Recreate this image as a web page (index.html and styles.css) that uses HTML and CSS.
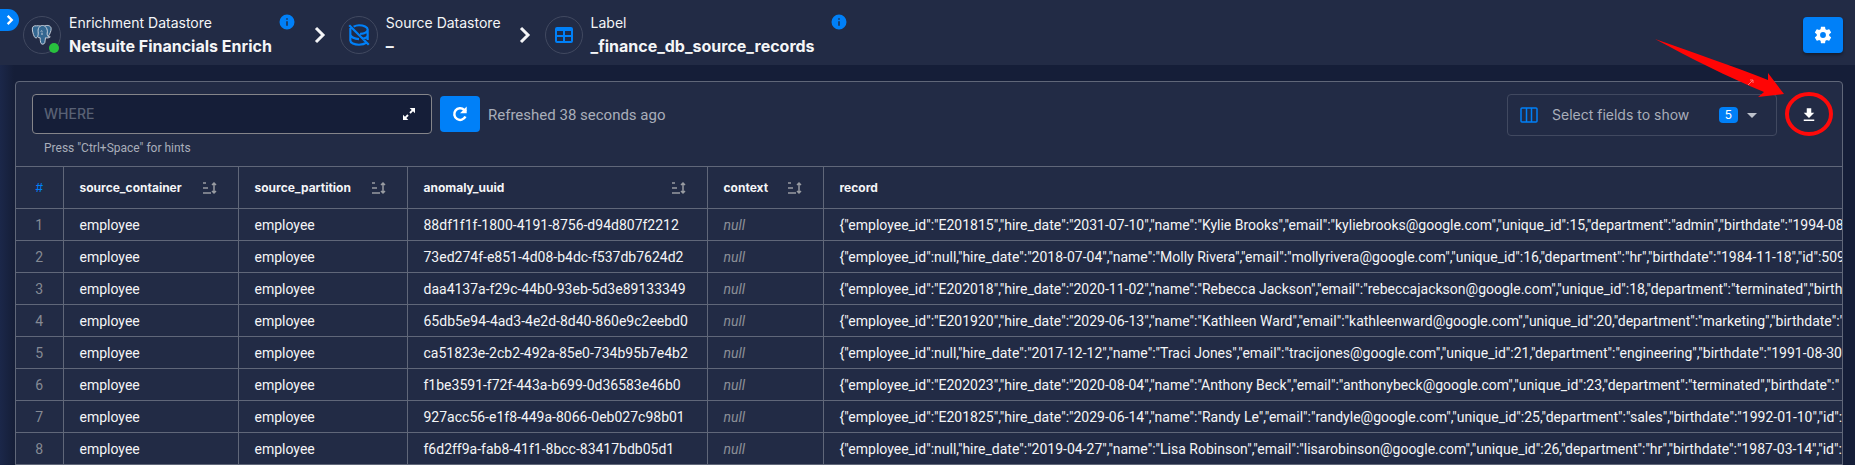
FILE: index.html
```html
<!DOCTYPE html>
<html lang="en">
<head>
<meta charset="utf-8">
<title>_finance_db_source_records</title>
<link rel="stylesheet" href="styles.css">
</head>
<body>
<button class="drawer-toggle" type="button" aria-label="Open sidebar">
  <svg viewBox="0 0 24 24" width="14" height="14"><path d="M8 5l7 7-7 7" fill="none" stroke="currentColor" stroke-width="4"/></svg>
</button>

<header class="topbar">
  <nav class="crumbs" aria-label="Breadcrumb">
    <div class="crumb">
      <span class="avatar">
        <svg viewBox="0 0 24 24" width="22" height="22">
          <path d="M6 2C3 1.500 1 3 1.500 6.500c.4 3 1.600 7.500 3.300 8.600 1 .5 1.800-.4 2.600-1.300L8.500 15H10c.1 2 .1 4.500 1 6.200.8 1.300 3.500 1 4-.7.5-1.800.5-3.800.8-5.500 1.600.4 4.200.3 5.200-1-.6-.3-1.700-.2-2.200-.5 1.700-2.300 3.300-6 3.200-8.500C21.800 1.600 17.800 1 15 2c-1.700-.5-3.500-.5-5 .2C8.800 1.900 7.500 1.800 6 2z" fill="#336791" stroke="#d5dae2" stroke-width="1"/>
          <path d="M10 2.500C8 4 7.500 6 7.800 8.500c.2 2 .2 3.500-.6 5M15 2.300c2 1.600 3 4 2.900 6.200-.4 2-.6 3.500.8 5M12 12V9.500M10.500 8c.6-.6 1.400-.6 2 0" fill="none" stroke="#d5dae2" stroke-width="1"/>
        </svg>
        <span class="status"></span>
      </span>
      <div class="crumb-text crumb-store">
        <span class="crumb-kind">Enrichment Datastore</span>
        <strong class="crumb-name">Netsuite Financials Enrich</strong>
      </div>
      <svg class="info" viewBox="0 0 24 24" width="18" height="18"><path fill="currentColor" d="M13 9h-2V7h2m0 10h-2v-6h2m-1-9A10 10 0 1 0 22 12 10 10 0 0 0 12 2z"/></svg>
    </div>
    <svg class="sep" viewBox="0 0 24 24" width="24" height="24"><path d="M8 5l7 7-7 7" fill="none" stroke="currentColor" stroke-width="3"/></svg>
    <div class="crumb">
      <span class="avatar">
        <svg class="blue" viewBox="0 0 24 24" width="26" height="26" fill="none" stroke="currentColor" stroke-width="2">
          <path d="M7 4.300C8.300 3.600 10 3 12 3c4.400 0 8 1.800 8 4s-3 3.800-7 4M4 5.500V17c0 2.200 3.600 4 8 4 2.800 0 5.300-.7 6.700-1.900M20 7v9.500M4 12c.8 1.800 4 3.500 8 3.800M15 15.500c3-.5 5-1.800 5-3.500M3 3l18 18"/>
        </svg>
      </span>
      <div class="crumb-text">
        <span class="crumb-kind">Source Datastore</span>
        <strong class="crumb-name">–</strong>
      </div>
    </div>
    <svg class="sep" viewBox="0 0 24 24" width="24" height="24"><path d="M8 5l7 7-7 7" fill="none" stroke="currentColor" stroke-width="3"/></svg>
    <div class="crumb">
      <span class="avatar">
        <svg class="blue" viewBox="0 0 24 24" width="24" height="24"><path fill="currentColor" fill-rule="evenodd" d="M5 4h14a2 2 0 0 1 2 2v12a2 2 0 0 1-2 2H5a2 2 0 0 1-2-2V6a2 2 0 0 1 2-2zM5 8v4h6V8zM13 8v4h6V8zM5 14v4h6v-4zM13 14v4h6v-4z"/></svg>
      </span>
      <div class="crumb-text crumb-container">
        <span class="crumb-kind">Label</span>
        <strong class="crumb-name">_finance_db_source_records</strong>
      </div>
      <svg class="info" viewBox="0 0 24 24" width="18" height="18"><path fill="currentColor" d="M13 9h-2V7h2m0 10h-2v-6h2m-1-9A10 10 0 1 0 22 12 10 10 0 0 0 12 2z"/></svg>
    </div>
  </nav>
  <button class="square raised" type="button" aria-label="Settings">
    <svg viewBox="0 0 24 24" width="20" height="20"><path fill="currentColor" d="M12 15.500A3.500 3.500 0 0 1 8.500 12 3.500 3.500 0 0 1 12 8.500a3.500 3.500 0 0 1 3.500 3.500 3.500 3.500 0 0 1-3.500 3.500m7.430-2.530c.04-.32.070-.64.070-.97s-.03-.66-.07-1l2.110-1.630c.19-.15.240-.42.120-.64l-2-3.460c-.12-.22-.39-.31-.61-.22l-2.490 1c-.52-.39-1.060-.73-1.690-.98l-.37-2.650A.506.506 0 0 0 14 2h-4c-.25 0-.46.180-.5.420l-.37 2.650c-.63.250-1.170.590-1.690.980l-2.490-1c-.22-.09-.49 0-.61.220l-2 3.460c-.13.220-.07.490.12.640L4.570 11c-.04.340-.07.670-.07 1s.03.650.07.970l-2.110 1.660c-.19.150-.25.420-.12.640l2 3.460c.12.220.39.300.61.220l2.490-1.010c.52.400 1.060.740 1.690.990l.37 2.650c.04.240.25.420.5.420h4c.25 0 .46-.18.500-.42l.37-2.650c.63-.26 1.170-.59 1.690-.99l2.490 1.010c.22.080.49 0 .61-.22l2-3.460c.12-.22.070-.49-.12-.64z"/></svg>
  </button>
</header>

<main class="panel">
  <div class="toolbar">
    <div class="filter">
      <div class="filter-box">
        <input class="filter-input" type="text" placeholder="WHERE" aria-label="Where clause" aria-describedby="hint">
        <button class="plain" type="button" aria-label="Expand editor">
          <svg viewBox="0 0 24 24" width="16" height="16"><path fill="currentColor" d="M13 3h8v8l-3-3-3.500 3.500-2-2L16 6zM11 21H3v-8l3 3 3.500-3.500 2 2L8 18z"/></svg>
        </button>
      </div>
      <span class="hint" id="hint">Press "Ctrl+Space" for hints</span>
    </div>
    <button class="square" type="button" aria-label="Refresh">
      <svg viewBox="0 0 24 24" width="20" height="20"><path d="M18.500 15A7 7 0 1 1 17 7l2 2" fill="none" stroke="currentColor" stroke-width="3"/><path d="M20 3v8h-8z" fill="currentColor"/></svg>
    </button>
    <span class="refreshed">Refreshed 38 seconds ago</span>
    <div class="fields">
      <svg class="blue" viewBox="0 0 24 24" width="24" height="24"><rect x="4" y="5" width="16" height="14" rx="1" fill="none" stroke="currentColor" stroke-width="1.500"/><path d="M9.500 5v14M14.500 5v14" stroke="currentColor" stroke-width="1.500"/></svg>
      <select class="fields-select" aria-label="Fields to show"><option>Select fields to show</option></select>
      <span class="badge">5</span>
      <svg viewBox="0 0 24 24" width="24" height="24"><path fill="currentColor" d="M7 10l5 5 5-5z"/></svg>
    </div>
    <div class="export">
      <button class="plain" type="button" aria-label="Download">
        <svg viewBox="0 0 24 24" width="18" height="18"><path fill="currentColor" d="M5 20h14v-2H5m14-9h-4V3H9v6H5l7 7z"/></svg>
      </button>
      <svg class="callout" viewBox="0 0 190 110" width="190" height="110">
        <path fill="#ff0505" d="M5 8C45 22 85 36 118 49L118 42 134 63 108 66 114 61C78 46 40 27 5 8Z"/>
        <path d="M98 54l5-5m-3 0h3v3" stroke="#f77" fill="none"/>
        <ellipse cx="159" cy="83" rx="22" ry="20" fill="none" stroke="#ff0a0a" stroke-width="4"/>
      </svg>
    </div>
  </div>

  <div class="grid-wrap">
  <table class="grid">
    <colgroup><col class="c-num"><col class="c-container"><col class="c-partition"><col class="c-uuid"><col class="c-context"><col></colgroup>
    <thead>
      <tr>
        <th class="num" scope="col">#</th>
        <th scope="col"><span class="th">source_container <svg class="sort" viewBox="0 0 16 14" width="16" height="14"><path d="M1 2h3M1 7h5M1 12h8M12 2v10M10 4l2-2 2 2M10 10l2 2 2-2"/></svg></span></th>
        <th scope="col"><span class="th">source_partition <svg class="sort" viewBox="0 0 16 14" width="16" height="14"><path d="M1 2h3M1 7h5M1 12h8M12 2v10M10 4l2-2 2 2M10 10l2 2 2-2"/></svg></span></th>
        <th scope="col"><span class="th">anomaly_uuid <svg class="sort" viewBox="0 0 16 14" width="16" height="14"><path d="M1 2h3M1 7h5M1 12h8M12 2v10M10 4l2-2 2 2M10 10l2 2 2-2"/></svg></span></th>
        <th scope="col"><span class="th">context <svg class="sort" viewBox="0 0 16 14" width="16" height="14"><path d="M1 2h3M1 7h5M1 12h8M12 2v10M10 4l2-2 2 2M10 10l2 2 2-2"/></svg></span></th>
        <th scope="col">record</th>
      </tr>
    </thead>
    <tbody>
      <tr><td class="num">1</td><td>employee</td><td>employee</td><td>88df1f1f-1800-4191-8756-d94d807f2212</td><td class="null">null</td><td>{"employee_id":"E201815","hire_date":"2031-07-10","name":"Kylie Brooks","email":"kyliebrooks@google.com","unique_id":15,"department":"admin","birthdate":"1994-08-0</td></tr>
      <tr><td class="num">2</td><td>employee</td><td>employee</td><td>73ed274f-e851-4d08-b4dc-f537db7624d2</td><td class="null">null</td><td>{"employee_id":null,"hire_date":"2018-07-04","name":"Molly Rivera","email":"mollyrivera@google.com","unique_id":16,"department":"hr","birthdate":"1984-11-18","id":5092</td></tr>
      <tr><td class="num">3</td><td>employee</td><td>employee</td><td>daa4137a-f29c-44b0-93eb-5d3e89133349</td><td class="null">null</td><td>{"employee_id":"E202018","hire_date":"2020-11-02","name":"Rebecca Jackson","email":"rebeccajackson@google.com","unique_id":18,"department":"terminated","birthda</td></tr>
      <tr><td class="num">4</td><td>employee</td><td>employee</td><td>65db5e94-4ad3-4e2d-8d40-860e9c2eebd0</td><td class="null">null</td><td>{"employee_id":"E201920","hire_date":"2029-06-13","name":"Kathleen Ward","email":"kathleenward@google.com","unique_id":20,"department":"marketing","birthdate":"</td></tr>
      <tr><td class="num">5</td><td>employee</td><td>employee</td><td>ca51823e-2cb2-492a-85e0-734b95b7e4b2</td><td class="null">null</td><td>{"employee_id":null,"hire_date":"2017-12-12","name":"Traci Jones","email":"tracijones@google.com","unique_id":21,"department":"engineering","birthdate":"1991-08-30","</td></tr>
      <tr><td class="num">6</td><td>employee</td><td>employee</td><td>f1be3591-f72f-443a-b699-0d36583e46b0</td><td class="null">null</td><td>{"employee_id":"E202023","hire_date":"2020-08-04","name":"Anthony Beck","email":"anthonybeck@google.com","unique_id":23,"department":"terminated","birthdate":"</td></tr>
      <tr><td class="num">7</td><td>employee</td><td>employee</td><td>927acc56-e1f8-449a-8066-0eb027c98b01</td><td class="null">null</td><td>{"employee_id":"E201825","hire_date":"2029-06-14","name":"Randy Le","email":"randyle@google.com","unique_id":25,"department":"sales","birthdate":"1992-01-10","id":5</td></tr>
      <tr><td class="num">8</td><td>employee</td><td>employee</td><td>f6d2ff9a-fab8-41f1-8bcc-83417bdb05d1</td><td class="null">null</td><td>{"employee_id":null,"hire_date":"2019-04-27","name":"Lisa Robinson","email":"lisarobinson@google.com","unique_id":26,"department":"hr","birthdate":"1987-03-14","id":5</td></tr>
    </tbody>
  </table>
  </div>
</main>
</body>
</html>
```

FILE: styles.css
```css
:root {
  --surface: #222b45;
  --page: #151e38;
  --blue: #0080f8;
  --line: #606779;
  --muted: #a9aeba;
}
* { box-sizing: border-box; }
body {
  margin: 0;
  background: linear-gradient(to right, #1b2749, var(--page) 14px);
  color: #f4f5f7;
  font: 14px/20px Inter, sans-serif;
}
svg { display: block; flex: none; }
button, input, select { font: inherit; color: inherit; }
button { border: 0; padding: 0; cursor: pointer; }

.drawer-toggle {
  position: absolute;
  top: 9px;
  left: 0;
  width: 19px;
  height: 22px;
  display: grid;
  place-items: center;
  background: var(--blue);
  color: #fff;
  border-radius: 0 11px 11px 0;
}

.topbar {
  display: flex;
  align-items: center;
  justify-content: space-between;
  min-height: 65px;
  padding: 5px 12px 0 23px;
  background: var(--surface);
}
.crumbs { display: flex; align-items: center; }
.crumb { display: flex; align-items: center; }
.avatar {
  position: relative;
  display: grid;
  place-items: center;
  width: 38px;
  height: 38px;
  margin-right: 8px;
  border: 1px solid #414960;
  border-radius: 50%;
}
.status {
  position: absolute;
  right: 1px;
  bottom: 0;
  width: 10px;
  height: 10px;
  border-radius: 50%;
  background: #28c13e;
}
.crumb-text { display: flex; flex-direction: column; gap: 3px; padding-bottom: 1px; }
.crumb-store { min-width: 202px; }
.crumb-container { min-width: 233px; }
.crumb-name { font-size: 16px; font-weight: 700; line-height: 20px; }
.info { align-self: flex-start; margin-left: 6px; color: var(--blue); }
.blue { color: var(--blue); }
.sep { margin: 0 8px 0 12px; }

.square {
  display: grid;
  place-items: center;
  flex: none;
  width: 40px;
  height: 36px;
  border-radius: 4px;
  background: var(--blue);
  color: #fff;
}
.raised { box-shadow: 0 2px 3px rgba(0, 0, 0, .35); }
.plain { display: grid; place-items: center; background: none; color: #fff; }

.panel {
  margin: 16px 12px 0 15px;
  border: 1px solid var(--line);
  border-radius: 4px 4px 0 0;
  background: var(--surface);
}
.toolbar {
  display: flex;
  align-items: flex-start;
  padding: 12px 24px 0 16px;
  min-height: 84px;
}
.toolbar > .square { margin-top: 2px; }
.filter { display: flex; flex-direction: column; gap: 4px; width: 400px; margin-right: 8px; }
.filter-box {
  display: flex;
  align-items: center;
  height: 40px;
  padding: 0 14px 0 11px;
  border: 1px solid #85858a;
  border-radius: 4px;
  background: var(--page);
}
.filter-input { flex: 1; min-width: 0; padding: 0; border: 0; outline: 0; background: none; }
.filter-input::placeholder { color: #596174; font-weight: 500; opacity: 1; }
.hint { padding-left: 12px; font-family: Roboto, sans-serif; font-size: 12px; color: var(--muted); }
.refreshed { margin: 11px 0 0 8px; font-family: Roboto, sans-serif; font-size: 15px; color: var(--muted); }
.fields {
  display: flex;
  align-items: center;
  width: 270px;
  height: 42px;
  margin-left: auto;
  padding: 0 12px 0 9px;
  border: 1px solid #414960;
  border-radius: 4px;
  color: #bdc1cb;
}
.fields-select {
  flex: 1;
  min-width: 0;
  margin-left: 11px;
  padding: 0;
  border: 0;
  appearance: none;
  background: none;
  color: var(--muted);
}
.badge {
  width: 19px;
  border-radius: 4px;
  margin-right: 2px;
  background: var(--blue);
  color: #fff;
  font-size: 12px;
  line-height: 16px;
  text-align: center;
}
.export { position: relative; display: grid; place-items: center; height: 42px; margin-left: 23px; }
.callout { position: absolute; right: -22px; bottom: -5px; pointer-events: none; }

.grid-wrap { overflow: hidden; }
.grid { width: 100%; table-layout: fixed; border-collapse: collapse; }
.c-num { width: 47px; }
.c-container { width: 175px; }
.c-partition { width: 169px; }
.c-uuid { width: 300px; }
.c-context { width: 116px; }
.grid th, .grid td {
  height: 32px;
  padding: 0 0 0 16px;
  border: 1px solid var(--line);
  text-align: left;
  white-space: nowrap;
}
.grid td { font: 14px/20px Roboto, sans-serif; }
.grid th { height: 42px; font-size: 12px; font-weight: 700; }
.grid tr > :first-child { border-left: 0; }
.grid tr > :last-child { border-right: 0; }
.grid .num { padding: 0; text-align: center; font-weight: 400; color: #858a94; }
.grid th.num { color: var(--blue); }
.grid .null { font-style: italic; color: #8b8f97; }
.th { display: flex; align-items: center; justify-content: space-between; padding-right: 20px; }
.sort { fill: none; stroke: #989ba1; stroke-width: 1.500; }
```
